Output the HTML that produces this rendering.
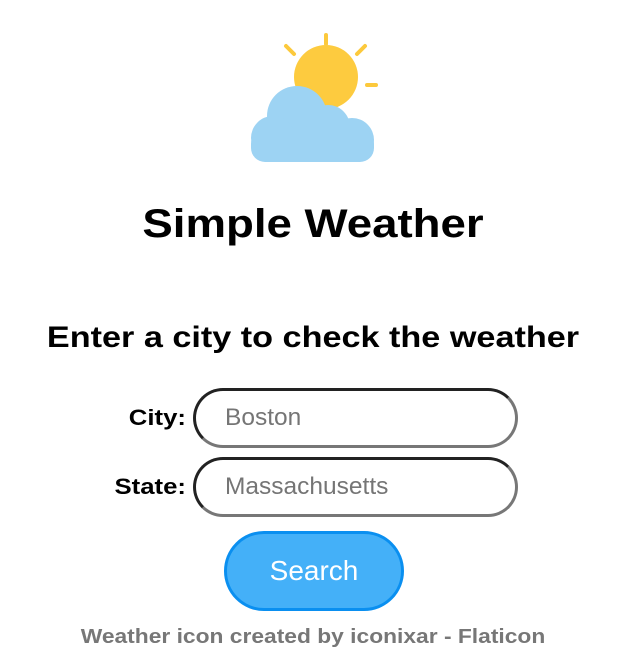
<!DOCTYPE html>
<html><head><style>
body{margin:0;width:626px;height:662px;background:#fff;font-family:"Liberation Sans",sans-serif;position:relative;overflow:hidden}
.a{position:absolute;left:0;width:626px;text-align:center;font-weight:bold;color:#000;transform:scaleX(1.14)}
.lbl{position:absolute;font-weight:bold;font-size:22px;text-align:right;width:90px;transform:scaleX(1.17);transform-origin:right center}
.inp{position:absolute;left:193px;width:319px;height:54px;border-radius:30px;border:3px solid;border-color:#222 #777 #777 #222;box-sizing:content-box;color:#757575;font-size:24.5px;line-height:54px;padding-left:0}
.inp span{position:absolute;left:29px}
</style></head><body>
<svg style="position:absolute;left:240px;top:30px" width="150" height="140" viewBox="0 0 150 140">
<g stroke="#fcc93c" stroke-width="4" stroke-linecap="round">
<line x1="86" y1="5" x2="86" y2="14"/><line x1="46" y1="16" x2="54" y2="24"/><line x1="125" y1="16" x2="117" y2="24"/><line x1="127" y1="55" x2="136" y2="55"/>
</g>
<circle cx="86" cy="47" r="32" fill="#fdcb3f"/>
<g fill="#9dd3f3">
<circle cx="57" cy="86" r="30"/><circle cx="88" cy="97" r="22"/><circle cx="33" cy="108" r="22"/><circle cx="112" cy="110" r="22"/>
<rect x="11" y="100" width="123" height="32" rx="14"/>
</g>
</svg>
<div class="a" style="top:202px;font-size:40px">Simple Weather</div>
<div class="a" style="top:321px;font-size:30px">Enter a city to check the weather</div>
<div class="lbl" style="left:96px;top:405px">City:</div>
<div class="inp" style="top:388px"><span>Boston</span></div>
<div class="lbl" style="left:96px;top:474px">State:</div>
<div class="inp" style="top:457px"><span>Massachusetts</span></div>
<div style="position:absolute;left:224px;top:531px;width:174px;height:74px;border:3px solid #0a8ff0;border-radius:40px;background:#44b0f8;color:#fff;font-size:28px;text-align:center;line-height:74px">Search</div>
<div class="a" style="top:626px;font-size:20px;color:#777">Weather icon created by iconixar - Flaticon</div>
</body></html>
